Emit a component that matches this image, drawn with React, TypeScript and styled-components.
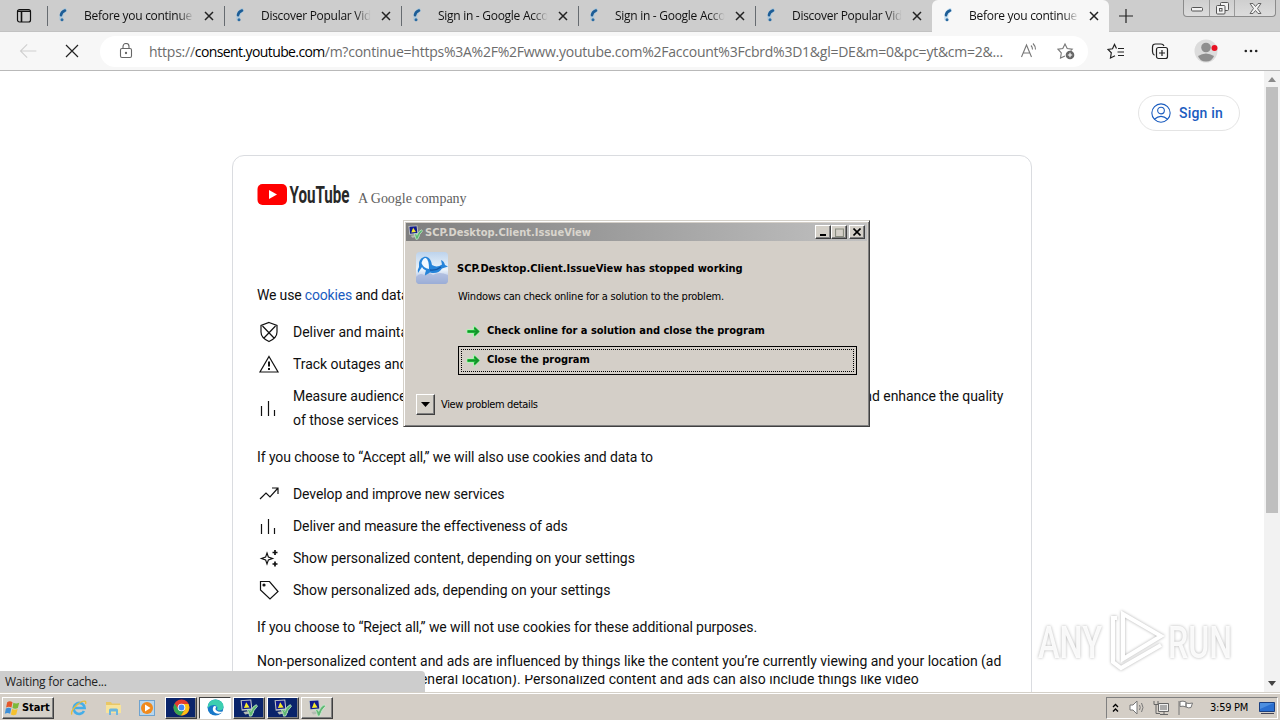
import React from 'react';
import styled, { createGlobalStyle, css } from 'styled-components';

const GlobalStyle = createGlobalStyle`
  * { box-sizing: border-box; }
  body {
    margin: 0;
    background: #fff;
    overflow: hidden;
  }
  p, ul, h1 { margin: 0; padding: 0; }
  ul { list-style: none; }
  svg { display: block; flex: none; }
`

const segoe = css`font-family: 'Open Sans', 'Noto Sans', sans-serif;`
const tahoma = css`font-family: 'DejaVu Sans Condensed', 'DejaVu Sans', sans-serif; font-stretch: condensed;`

const Screen = styled.div`
  position: relative;
  display: flex;
  flex-direction: column;
  width: 1280px;
  height: 720px;
  overflow: hidden;
`

/* ---------- tab strip ---------- */

const TabStrip = styled.div`
  display: flex;
  flex: none;
  height: 32px;
  background: #cdcdcd;
  border-bottom: 1px solid #c2c2c2;
`

const TabActions = styled.div`
  display: flex;
  align-items: center;
  width: 47px;
  padding-left: 16px;
`

const Tab = styled.div<{ $active?: boolean }>`
  ${segoe}
  display: flex;
  align-items: center;
  width: 177px;
  height: 32px;
  padding-left: 10px;
  position: relative;
  background: ${p => p.$active ? '#f7f7f7' : 'linear-gradient(#666b70, #666b70) 0 6px / 1px 20px no-repeat'};
  border-radius: ${p => p.$active ? '6px 6px 0 0' : '0'};
`

const TabTitle = styled.span`
  width: 112px;
  margin-left: 14px;
  white-space: nowrap;
  font-size: 12px;
  line-height: 20px;
  letter-spacing: -0.28px;
  color: #111;
  mask-image: linear-gradient(90deg, #000 84%, transparent 98%);
`

const TabClose = styled.svg`
  margin-left: 8px;
`

const NewTab = styled.div`
  display: flex;
  align-items: center;
  width: 74px;
  padding-left: 10px;
`

const WindowControls = styled.div`
  display: grid;
  grid-template-columns: 25px 25px 41px;
  width: 93px;
  height: 17px;
  border: 1px solid #8b8b8b;
  border-top: 0;
  border-radius: 0 0 4px 4px;
  background: linear-gradient(#cfcfcf, #dcdcdc);
`

const WindowControl = styled.div`
  display: flex;
  align-items: center;
  justify-content: center;
  & + & { border-left: 1px solid #9a9a9a; }
`

/* ---------- address bar ---------- */

const Toolbar = styled.div`
  display: flex;
  flex: none;
  align-items: center;
  height: 39px;
  padding: 0 18px;
  background: #f7f7f7;
  border-bottom: 1px solid #b9b9b9;
`

const AddressBar = styled.div`
  ${segoe}
  display: flex;
  align-items: center;
  width: 988px;
  height: 31px;
  margin-left: 20px;
  padding-left: 18px;
  border-radius: 16px;
  background: #fff;
`

const Url = styled.span`
  width: 871px;
  margin-left: 15px;
  white-space: nowrap;
  font-size: 14px;
  letter-spacing: -0.24px;
  color: #6c6c6c;
  b { font-weight: 400; letter-spacing: -0.6px; color: #000; }
`

const Gap = styled.span<{ $w: number }>`
  flex: none;
  width: ${p => p.$w}px;
`

/* ---------- page ---------- */

const Viewport = styled.div`
  position: relative;
  display: flex;
  flex: none;
  height: 621px;
  overflow: hidden;
`

const Page = styled.div`
  display: flex;
  flex-direction: column;
  align-items: center;
  width: 1264px;
  font-family: Roboto, sans-serif;
`

const SignIn = styled.div`
  display: flex;
  flex: none;
  align-items: center;
  align-self: flex-end;
  width: 102px;
  height: 36px;
  margin: 24px 24px 24px 0;
  padding-left: 12px;
  border: 1px solid #e4e4e4;
  border-radius: 18px;
  font-size: 14px;
  font-weight: 500;
  letter-spacing: 0.2px;
  color: #1a5cbf;
  gap: 8px;
`

const Card = styled.section`
  flex: none;
  width: 800px;
  height: 700px;
  padding: 27px 0 0 24px;
  border: 1px solid #dadce0;
  border-radius: 12px;
  font-size: 14px;
  line-height: 24px;
  color: #0f0f0f;
`

const Brand = styled.div`
  display: flex;
  align-items: flex-start;
  height: 100px;
  gap: 8px;
`

const Company = styled.span`
  margin-top: 4px;
  font-family: 'Liberation Serif', serif;
  font-size: 14px;
  letter-spacing: -0.02px;
  color: #606060;
`

const Para = styled.p<{ $gap?: number; $track?: number }>`
  margin-bottom: ${p => p.$gap ?? 13}px;
  letter-spacing: ${p => p.$track ?? 0}px;
  white-space: nowrap;
  a { color: #1a5cbf; }
`

const Purposes = styled.ul`
  display: flex;
  flex-direction: column;
  gap: 8px;
  margin-bottom: 13px;
`

const Purpose = styled.li<{ $track?: number }>`
  display: flex;
  align-items: center;
  gap: 12px;
  white-space: nowrap;
  letter-spacing: ${p => p.$track ?? 0}px;
`

// second line is only partly repainted while the page is still loading
const TornLine = styled.p<{ $track?: number }>`
  height: 17px;
  margin-top: 2px;
  overflow: hidden;
  line-height: 24px;
  white-space: nowrap;
  letter-spacing: ${p => p.$track ?? 0}px;
  span { display: block; margin-top: -8px; }
`

const ScrollBar = styled.div`
  display: flex;
  flex-direction: column;
  align-items: center;
  justify-content: space-between;
  width: 16px;
  padding: 6px 0;
  background: linear-gradient(#bfbfbf, #bfbfbf) 2px 16px / 12px 426px no-repeat #f2f2f2;
`

const StatusBubble = styled.div`
  ${segoe}
  position: absolute;
  left: 0;
  bottom: 0;
  width: 425px;
  height: 21px;
  padding-left: 5px;
  border-top-right-radius: 4px;
  background: #cdcdcd;
  font-size: 12px;
  line-height: 22px;
  letter-spacing: -0.22px;
  color: #222;
`

const Watermark = styled.svg`
  position: absolute;
  left: 1030px;
  top: 600px;
  filter: drop-shadow(0 0 1.5px rgba(0, 0, 0, 0.32));
`

/* ---------- error dialog ---------- */

const Dialog = styled.div`
  ${tahoma}
  position: absolute;
  left: 403px;
  top: 220px;
  width: 467px;
  height: 207px;
  padding: 2px;
  background: #d4cfc8;
  border: 1px solid;
  border-color: #d4d0c8 #404040 #404040 #d4d0c8;
  box-shadow: inset 1px 1px #fff, inset -1px -1px #808080;
  font-size: 11px;
  color: #000;
`

const TitleBar = styled.div`
  display: flex;
  align-items: center;
  height: 18px;
  padding: 0 2px;
  background: linear-gradient(90deg, #7f7f7f, #c1c1c1);
  font-weight: 700;
  color: #d9d5cd;
`

const TitleText = styled.span`
  flex: 1;
  margin-left: 2px;
  white-space: nowrap;
  letter-spacing: 0.02px;
`

const raised = css`
  border: 1px solid;
  border-color: #fff #404040 #404040 #fff;
  box-shadow: inset -1px -1px #808080;
  background: #d4d0c8;
`

const CaptionButton = styled.div<{ $gap?: number }>`
  ${raised}
  display: flex;
  align-items: center;
  justify-content: center;
  width: 16px;
  height: 14px;
  margin-left: ${p => p.$gap ?? 0}px;
`

const DialogBody = styled.div`
  display: grid;
  grid-template-columns: 42px 1fr;
  padding: 11px 10px 0 10px;
`

const Headline = styled.h1`
  height: 33px;
  margin-left: -1px;
  font-size: 11px;
  line-height: 34px;
  letter-spacing: 0;
  white-space: nowrap;
`

const Detail = styled.p`
  height: 32px;
  line-height: 24px;
  letter-spacing: -0.23px;
  white-space: nowrap;
`

const Command = styled.div<{ $focused?: boolean }>`
  display: flex;
  align-items: center;
  height: 29px;
  padding: 0 2px;
  width: 399px;
  border: 1px solid ${p => p.$focused ? '#000' : 'transparent'};
  font-weight: 700;
  letter-spacing: -0.02px;
`

const CommandInner = styled.div<{ $focused?: boolean }>`
  display: flex;
  align-items: center;
  flex: 1;
  gap: 6px;
  height: 23px;
  padding: 0 0 2px 4px;
  border: 1px dotted ${p => p.$focused ? '#000' : 'transparent'};
  svg { margin-top: 2px; }
`

const Details = styled.div`
  display: flex;
  align-items: center;
  gap: 6px;
  margin: 19px 0 0 10px;
  letter-spacing: -0.35px;
`

const Expander = styled.div`
  ${raised}
  display: flex;
  align-items: center;
  justify-content: center;
  width: 19px;
  height: 21px;
`

/* ---------- taskbar ---------- */

const Taskbar = styled.div`
  ${tahoma}
  display: flex;
  align-items: center;
  flex: none;
  height: 28px;
  padding: 2px 2px 0;
  background: #d4cec6;
  border-top: 1px solid #d4d0c8;
  box-shadow: inset 0 1px #fff;
  font-size: 11px;
`

const StartButton = styled.div`
  ${raised}
  display: flex;
  align-items: center;
  width: 52px;
  height: 22px;
  margin-right: 8px;
  padding-left: 1px;
  gap: 1px;
  font-weight: 700;
  letter-spacing: -0.1px;
`

const Pinned = styled.div`
  display: flex;
  justify-content: center;
  width: 34px;
`

const TaskButton = styled.div<{ $tone: string; $pressed?: boolean }>`
  ${raised}
  display: flex;
  align-items: center;
  justify-content: center;
  width: 32px;
  height: 22px;
  margin-right: 2px;
  background: ${p => p.$tone};
  ${p => p.$pressed && css`
    border-color: #404040 #fff #fff #404040;
    box-shadow: none;
  `}
`

const Tray = styled.div`
  display: flex;
  align-items: center;
  width: 172px;
  height: 22px;
  margin-left: auto;
  padding: 0 1px 0 5px;
  border: 1px solid;
  border-color: #808080 #fff #fff #808080;
`

const Clock = styled.span`
  flex: 1;
  padding-left: 16px;
  letter-spacing: -0.25px;
  white-space: nowrap;
`

/* ---------- icons ---------- */

type LineIconProps = { size?: number; color?: string; width?: number; children: React.ReactNode }

function LineIcon({ size = 24, color = '#111', width = 1.2, children }: LineIconProps) {
  return (
    <svg width={size} height={size} viewBox="0 0 24 24" fill="none" stroke={color} strokeWidth={width}>
      {children}
    </svg>
  );
}

function Spinner() {
  return (
    <svg width="13" height="16" viewBox="0 0 13 16" fill="none">
      <path d="M9.500 1.500C5 3 3.500 6.500 4.500 12" stroke="#8fc3e8" strokeWidth="4" opacity=".45" />
      <path d="M8 2.500C5.500 3.500 4.200 5 4 7.200" stroke="#1d5d96" strokeWidth="2.600" strokeLinecap="round" />
      <circle cx="5" cy="11.700" r="1.500" fill="#2b6ca3" />
    </svg>
  );
}

function CloseIcon() {
  return (
    <TabClose width="10" height="10" viewBox="0 0 10 10" stroke="#222" strokeWidth="1.500">
      <path d="M1 1l8 8M9 1L1 9" />
    </TabClose>
  );
}

function BarsIcon() {
  return <LineIcon><path d="M4.500 10v10M11.500 5v15M17.500 14v6" /></LineIcon>;
}

function ProgramIcon({ size = 18 }: { size?: number }) {
  return (
    <svg width={size} height={size} viewBox="0 0 16 16">
      <path d="M.5 1l9.500-.5 1 9-9.500 1z" fill="#c9ccc8" />
      <path d="M1.500 1.800l7.700-.4.8 7-7.800.8z" fill="#101a8c" />
      <path d="M5.500 2.800l3 4.700-5 .5z" fill="#f7ea2c" />
      <path d="M3 11.500l8-1.300 1.500 2-8 1.500z" fill="#b5bbb3" />
      <path d="M6.500 9.500q2-1 3 1.500 1.500-4.500 5-6l1 1.500q-3.500 3-5 8.500l-2 .3q-.5-3.500-2-5.800z" fill="#5fb873" stroke="#cdeed2" strokeWidth=".7" />
    </svg>
  );
}

function GreenArrow() {
  return (
    <svg width="15" height="15" viewBox="0 0 15 15">
      <path d="M1 5.500h6.500V1.300L14 7.500l-6.500 6.200V9.500H1z" fill="#2fd44a" stroke="#b4efb6" strokeWidth="1" />
      <path d="M1.500 7.500h10M8.500 3.800l3.700 3.700-3.700 3.700" fill="none" stroke="#12932a" strokeWidth="1.900" />
    </svg>
  );
}

function DolphinIcon() {
  return (
    <svg width="32" height="32" viewBox="0 0 32 32">
      <defs>
        <linearGradient id="sky" x1="0" y1="0" x2="0" y2="1">
          <stop offset="0" stopColor="#bdd3ec" />
          <stop offset=".55" stopColor="#edf5fc" />
          <stop offset=".75" stopColor="#c3d0e9" />
          <stop offset="1" stopColor="#869fcf" />
        </linearGradient>
      </defs>
      <rect width="32" height="32" rx="4" fill="url(#sky)" />
      <path d="M0 25q4-5 8-2 4-4 9 0 6-4 15 0v5q0 4-4 4H4q-4 0-4-4z" fill="#a4b4da" opacity=".7" />
      <path d="M3 11C4 6 8 4 11 5q4 1.500 5 8 5 3 10-.5L25 8q3 1 4 5l3 1.500-6 2q-4 6-12 4l-5 3q0-3 1-5-3-1-4-3.500L2 21q-1-3 1-6z" fill="#2684da" />
      <path d="M5.500 11Q7 5.500 10 6q3 2 3 11-6-1-7.500-6z" fill="#f3f9ff" />
      <path d="M14 18q6 1 11-3" fill="none" stroke="#1557a6" strokeWidth="1.300" />
    </svg>
  );
}

function YouTubeLogo() {
  return (
    <svg width="93" height="24" viewBox="0 0 93 24">
      <rect x="0.500" y="1" width="29.500" height="21" rx="5" fill="#f00" />
      <path d="M12 7v9l8-4.500z" fill="#fff" />
      <text x="32.500" y="20" fontFamily="Roboto, sans-serif" fontSize="24" fontWeight="700" fill="#282828" textLength="60" lengthAdjust="spacingAndGlyphs">YouTube</text>
    </svg>
  );
}

/* ---------- sections ---------- */

const tabs = [
  'Before you continue',
  'Discover Popular Vid',
  'Sign in - Google Acco',
  'Sign in - Google Acco',
  'Discover Popular Vid',
  'Before you continue',
]

function Tabs() {
  return (
    <TabStrip>
      <TabActions>
        <svg width="16" height="16" viewBox="0 0 16 16">
          <rect x="1.500" y="1.500" width="13" height="12.500" rx="2" fill="none" stroke="#111" strokeWidth="1.200" />
          <path d="M1.500 3.300h13M5.500 4v10" stroke="#111" strokeWidth="1.600" />
        </svg>
      </TabActions>
      {tabs.map((title, i) => (
        <Tab key={i} $active={i === tabs.length - 1}>
          <Spinner />
          <TabTitle>{title}</TabTitle>
          <CloseIcon />
        </Tab>
      ))}
      <NewTab>
        <svg width="14" height="14" viewBox="0 0 14 14" stroke="#222" strokeWidth="1.200"><path d="M7 0v14M0 7h14" /></svg>
      </NewTab>
      <WindowControls>
        <WindowControl>
          <svg width="12" height="10" viewBox="0 0 12 10"><rect x=".5" y="4.500" width="11" height="3.500" rx="1" fill="#f2f2f2" stroke="#555" /></svg>
        </WindowControl>
        <WindowControl>
          <svg width="13" height="13" viewBox="0 0 13 13" fill="#f2f2f2" stroke="#555">
            <rect x="4.500" y=".5" width="8" height="8" rx="1" />
            <rect x=".5" y="3.500" width="8.500" height="8.500" rx="1" />
            <rect x="3.500" y="6.500" width="2.500" height="2.500" />
          </svg>
        </WindowControl>
        <WindowControl>
          <svg width="13" height="11" viewBox="0 0 13 11">
            <path d="M1 .5h3l2.500 3L9 .5h3L8.500 5.500 12 10.500H9L6.500 7.500 4 10.500H1l3.500-5z" fill="#f2f2f2" stroke="#666" />
          </svg>
        </WindowControl>
      </WindowControls>
    </TabStrip>
  );
}

function AddressRow() {
  return (
    <Toolbar>
      <LineIcon size={20} color="#cfcfcf" width={1.3}><path d="M22 12H3M11 4l-8 8 8 8" /></LineIcon>
      <Gap $w={26} />
      <svg width="16" height="16" viewBox="0 0 16 16" stroke="#222" strokeWidth="1.200"><path d="M2 2l12 12M14 2L2 14" /></svg>
      <AddressBar>
        <svg width="16" height="16" viewBox="0 0 16 16" fill="none" stroke="#666" strokeWidth="1.100">
          <rect x="2.500" y="5.500" width="11" height="9" rx="1.500" />
          <path d="M5 5.500V3.500a3 3 0 0 1 6 0v2" />
          <circle cx="8" cy="10" r=".6" fill="#666" />
        </svg>
        <Url>
          https://<b>consent.youtube.com</b>/m?continue=https%3A%2F%2Fwww.youtube.com%2Faccount%3Fcbrd%3D1&amp;gl=DE&amp;m=0&amp;pc=yt&amp;cm=2&amp;...
        </Url>
        <svg width="18" height="18" viewBox="0 0 18 18" fill="none" stroke="#777" strokeWidth="1.100">
          <path d="M1.500 15L6.500 3l5 12M3.200 11h6.600M11 3.500q1.500 1.500 1.500 4M13 1.500q2.500 2.500 2.500 6" />
        </svg>
        <Gap $w={19} />
        <svg width="19" height="18" viewBox="0 0 19 18" fill="none" stroke="#777" strokeWidth="1.100">
          <path d="M8 14l-4.500 2 .8-5L1 7.200l4.800-.7L8 2l2.200 4.500 5 .7-1.500 1.500" />
          <circle cx="13" cy="13" r="4.300" fill="#666" stroke="none" />
          <path d="M13 10.800v4.400M10.800 13h4.400" stroke="#fff" />
        </svg>
      </AddressBar>
      <Gap $w={19} />
      <svg width="18" height="18" viewBox="0 0 18 18" fill="none" stroke="#222" strokeWidth="1.200">
        <path d="M9.500 6.500L7.500 2.500 5.500 6.800 1 7.500l3.300 3.300L3.500 16l4.500-2.300M11 6.500h6M10.500 10H17M11 13.500h6" />
      </svg>
      <Gap $w={26} />
      <svg width="18" height="18" viewBox="0 0 18 18" fill="none" stroke="#222" strokeWidth="1.200">
        <path d="M3.500 13.200C2 12.500 1.500 11 1.500 9.500V5c0-2 1-3 3-3h5.500c1.500 0 2.500.7 3 2" />
        <rect x="5.500" y="5.500" width="11" height="11" rx="2" />
        <path d="M11 8v6M8 11h6" />
      </svg>
      <Gap $w={25} />
      <svg width="24" height="24" viewBox="0 0 24 24">
        <circle cx="12" cy="12" r="11.500" fill="#dcdcdc" />
        <circle cx="12" cy="8.500" r="4.800" fill="#8e8e8e" />
        <path d="M4 17q8-5 16 0-2 5.500-8 5.500T4 17z" fill="#8e8e8e" />
        <circle cx="20.500" cy="9" r="3" fill="#e81123" />
      </svg>
      <Gap $w={26} />
      <svg width="14" height="4" viewBox="0 0 14 4" fill="#222">
        <circle cx="1.800" cy="2" r="1.300" /><circle cx="7" cy="2" r="1.300" /><circle cx="12.200" cy="2" r="1.300" />
      </svg>
    </Toolbar>
  );
}

function ConsentPage() {
  return (
    <Viewport>
      <Page>
        <SignIn>
          <LineIcon size={20} color="#1a5cbf" width={1.3}>
            <circle cx="12" cy="12" r="11" /><circle cx="12" cy="9" r="4" /><path d="M4 19.500q8-7 16 0" />
          </LineIcon>
          Sign in
        </SignIn>
        <Card>
          <Brand>
            <YouTubeLogo />
            <Company>A Google company</Company>
          </Brand>
          <Para $track={-0.17}>We use <a>cookies</a> and data to</Para>
          <Purposes>
            <Purpose $track={-0.04}>
              <LineIcon>
                <path d="M12 2.500l8 3v6.500q0 6-8 9.500-8-3.500-8-9.500V5.500zM5.500 6l12 12.500M18.500 6l-12 12.500" />
              </LineIcon>
              Deliver and maintain Google services
            </Purpose>
            <Purpose $track={-0.04}>
              <LineIcon><path d="M12 4.500l9 15.500H3z" /><path d="M12 9.500v5M12 16v2" strokeWidth="2" /></LineIcon>
              Track outages and protect against spam, fraud, and abuse
            </Purpose>
            <Purpose $track={-0.05}>
              <BarsIcon />
              <span>Measure audience engagement and site statistics to understand how our services are used and enhance the quality<br />of those services</span>
            </Purpose>
          </Purposes>
          <Para $track={-0.09}>If you choose to “Accept all,” we will also use cookies and data to</Para>
          <Purposes>
            <Purpose $track={-0.1}>
              <LineIcon><path d="M3 17l6-6 4 4 8-9M15 6h6v6" /></LineIcon>
              Develop and improve new services
            </Purpose>
            <Purpose $track={-0.11}>
              <BarsIcon />
              Deliver and measure the effectiveness of ads
            </Purpose>
            <Purpose $track={-0.02}>
              <LineIcon>
                <path d="M10 7l1.400 4.100L15.500 12.500l-4.100 1.400L10 18l-1.400-4.100L4.500 12.500l4.100-1.400z" />
                <path d="M18 4v5M15.500 6.500h5M18 15.500v5M15.500 18h5" strokeWidth="1.700" />
              </LineIcon>
              Show personalized content, depending on your settings
            </Purpose>
            <Purpose $track={-0.02}>
              <LineIcon><path d="M3.500 3.500h9l8.500 10-8 7.500-9.500-9z" /><circle cx="7" cy="7" r="1" fill="#111" /></LineIcon>
              Show personalized ads, depending on your settings
            </Purpose>
          </Purposes>
          <Para $gap={10} $track={-0.085}>If you choose to “Reject all,” we will not use cookies for these additional purposes.</Para>
          <Para $gap={0} $track={-0.015}>Non-personalized content and ads are influenced by things like the content you’re currently viewing and your location (ad</Para>
          <TornLine $track={0.04}><span>serving is based on your general location). Personalized content and ads can also include things like video</span></TornLine>
        </Card>
      </Page>
      <ScrollBar>
        <svg width="8" height="5" viewBox="0 0 8 5"><path d="M4 0l4 5H0z" fill="#8a8a8a" /></svg>
        <svg width="8" height="5" viewBox="0 0 8 5"><path d="M4 5l4-5H0z" fill="#444" /></svg>
      </ScrollBar>
      <StatusBubble>Waiting for cache...</StatusBubble>
    </Viewport>
  );
}

function ErrorDialog() {
  return (
    <Dialog>
      <TitleBar>
        <ProgramIcon size={15} />
        <TitleText>SCP.Desktop.Client.IssueView</TitleText>
        <CaptionButton>
          <svg width="8" height="8" viewBox="0 0 8 8"><path d="M1 6h6v2H1z" /></svg>
        </CaptionButton>
        <CaptionButton>
          <svg width="9" height="9" viewBox="0 0 9 9"><path d="M.5 1h8v7.500h-8z" fill="none" stroke="#8a8d80" strokeWidth="1.200" /></svg>
        </CaptionButton>
        <CaptionButton $gap={2}>
          <svg width="8" height="8" viewBox="0 0 8 8" stroke="#000" strokeWidth="1.600"><path d="M.5.5l7 7M7.500.5l-7 7" /></svg>
        </CaptionButton>
      </TitleBar>
      <DialogBody>
        <DolphinIcon />
        <div>
          <Headline>SCP.Desktop.Client.IssueView has stopped working</Headline>
          <Detail>Windows can check online for a solution to the problem.</Detail>
        </div>
        <span />
        <div>
          <Command>
            <CommandInner><GreenArrow />Check online for a solution and close the program</CommandInner>
          </Command>
          <Command $focused>
            <CommandInner $focused><GreenArrow />Close the program</CommandInner>
          </Command>
        </div>
      </DialogBody>
      <Details>
        <Expander>
          <svg width="9" height="5" viewBox="0 0 9 5"><path d="M0 0h9L4.500 5z" /></svg>
        </Expander>
        View problem details
      </Details>
    </Dialog>
  );
}

function TaskbarRow() {
  return (
    <Taskbar>
      <StartButton>
        <svg width="17" height="16" viewBox="0 0 15 15">
          <path d="M2.500 2q2.500-1.500 5 0l-1 5q-2.500-1.500-5 0z" fill="#e4572a" />
          <path d="M8.300 2.500q2.500 1.500 5.500 0l-1.300 5q-2.500 1.500-5 0z" fill="#7db93a" />
          <path d="M1.300 8q2.500-1.500 5 0l-1 5q-2.500-1.500-5 0z" fill="#3d8fd8" />
          <path d="M7.100 8.500q2.500 1.500 5.200 0l-1.300 5q-2.500 1.500-5 0z" fill="#f5c12e" />
        </svg>
        Start
      </StartButton>
      <Pinned>
        <svg width="18" height="18" viewBox="0 0 18 18" fill="none">
          <path d="M14 12a5.500 5.500 0 1 1 .6-3H4.500" stroke="#45aee8" strokeWidth="2.600" />
          <path d="M2 15.500C0 13 6 5 12 2.500q5-1.500 3.500 2.500" stroke="#e8bd3c" strokeWidth="1.300" />
        </svg>
      </Pinned>
      <Pinned>
        <svg width="17" height="17" viewBox="0 0 17 17">
          <path d="M1 3h5l1 1.500h8V14H1z" fill="#e9c766" />
          <path d="M1 6h15v8H1z" fill="#f7e39a" />
          <path d="M4 16v-5q0-1.500 1.500-1.500h6Q13 9.500 13 11v5h-2v-3.500H6V16z" fill="#6cb7df" />
        </svg>
      </Pinned>
      <Pinned>
        <svg width="16" height="16" viewBox="0 0 16 16">
          <rect x=".5" y=".5" width="15" height="15" fill="#b7d6ee" stroke="#6fa3cf" />
          <circle cx="8" cy="8" r="6" fill="#f08a1d" />
          <path d="M6 4.500v7L11.500 8z" fill="#fff" />
        </svg>
      </Pinned>
      <Gap $w={1} />
      <TaskButton $tone="#0a246a">
        <svg width="17" height="17" viewBox="0 0 17 17">
          <circle cx="8.500" cy="8.500" r="8" fill="#e33b2e" />
          <path d="M1.600 4.500A8 8 0 0 0 8 16.500l3.500-6-6 .0z" fill="#35a853" />
          <path d="M8 16.500A8 8 0 0 0 15.500 5H8.500l3.500 5.500z" fill="#fbc116" />
          <circle cx="8.500" cy="8.500" r="3.800" fill="#fff" />
          <circle cx="8.500" cy="8.500" r="2.900" fill="#4285f4" />
        </svg>
      </TaskButton>
      <TaskButton $tone="#fff" $pressed>
        <svg width="17" height="17" viewBox="0 0 17 17">
          <circle cx="8.500" cy="8.500" r="8" fill="#1878c9" />
          <path d="M.8 7Q2 .5 8.500.5q7.500.5 8 7 0 4-4.500 4-3-.3-1.500-2.500Q10 6 6.500 6 3 6 .8 9z" fill="#3ccfb0" />
          <path d="M7 7q-2.500 3 0 6 3 3 7.500 1l1-1.500q-4 1-6-1Q7.500 10 9.500 7.500z" fill="#fff" />
        </svg>
      </TaskButton>
      <TaskButton $tone="#0a246a"><ProgramIcon /></TaskButton>
      <TaskButton $tone="#0a246a"><ProgramIcon /></TaskButton>
      <TaskButton $tone="#d4d0c8"><ProgramIcon /></TaskButton>
      <Tray>
        <svg width="7" height="10" viewBox="0 0 7 10" fill="none" stroke="#000" strokeWidth="1.300"><path d="M1 4l2.500-2.500L6 4M1 8.500L3.500 6 6 8.500" /></svg>
        <Gap $w={10} />
        <svg width="17" height="15" viewBox="0 0 17 15" fill="#fff" stroke="#777">
          <path d="M1 5h3l4-4v13l-4-4H1z" />
          <path d="M10.500 5q1.500 2.500 0 5M12.500 3q3 4.500 0 9" fill="none" />
        </svg>
        <Gap $w={7} />
        <svg width="17" height="16" viewBox="0 0 17 16" fill="#eee" stroke="#666">
          <path d="M5.500 3.500h10v8h-10zM7 14.500h8M11 11.500v3" />
          <path d="M7 5h7v5H7z" fill="#aaa" stroke="none" />
          <path d="M1 1v3.500h4V1M3 4.500v9h4" fill="none" />
        </svg>
        <Gap $w={7} />
        <svg width="17" height="15" viewBox="0 0 17 15" fill="#fff" stroke="#777">
          <path d="M2 1v14M3 1.500q3-1 6 .5v5q-3-1.500-6-.5zM9 3q3 1 6.500 0L14 7.500q-2 1-5-.5z" />
        </svg>
        <Clock>3:59 PM</Clock>
        <svg width="17" height="14" viewBox="0 0 17 14">
          <path d="M.5 1.500h15v9H.5z" fill="#2a6fd0" stroke="#1a3f80" />
          <path d="M1 2h14L1 8z" fill="#4d8fe0" />
          <path d="M2 12.500h13" stroke="#445" />
        </svg>
      </Tray>
    </Taskbar>
  );
}

function AnyRunMark() {
  return (
    <Watermark width="220" height="84" viewBox="0 0 220 84">
      <g fill="#fff" fontFamily="Roboto, sans-serif" fontSize="45" fontWeight="500" opacity=".9">
        <text x="8" y="58" textLength="64" lengthAdjust="spacingAndGlyphs">ANY</text>
        <text x="138" y="58" textLength="64" lengthAdjust="spacingAndGlyphs">RUN</text>
      </g>
      <g fill="none" stroke="#fff" strokeWidth="4">
        <path d="M93 14l38 22-38 23z" />
        <path d="M87 18h-4v44l8 6 40-23" />
      </g>
    </Watermark>
  );
}

function App() {
  return (
    <Screen>
      <GlobalStyle />
      <Tabs />
      <AddressRow />
      <ConsentPage />
      <TaskbarRow />
      <AnyRunMark />
      <ErrorDialog />
    </Screen>
  );
}

export default App;
